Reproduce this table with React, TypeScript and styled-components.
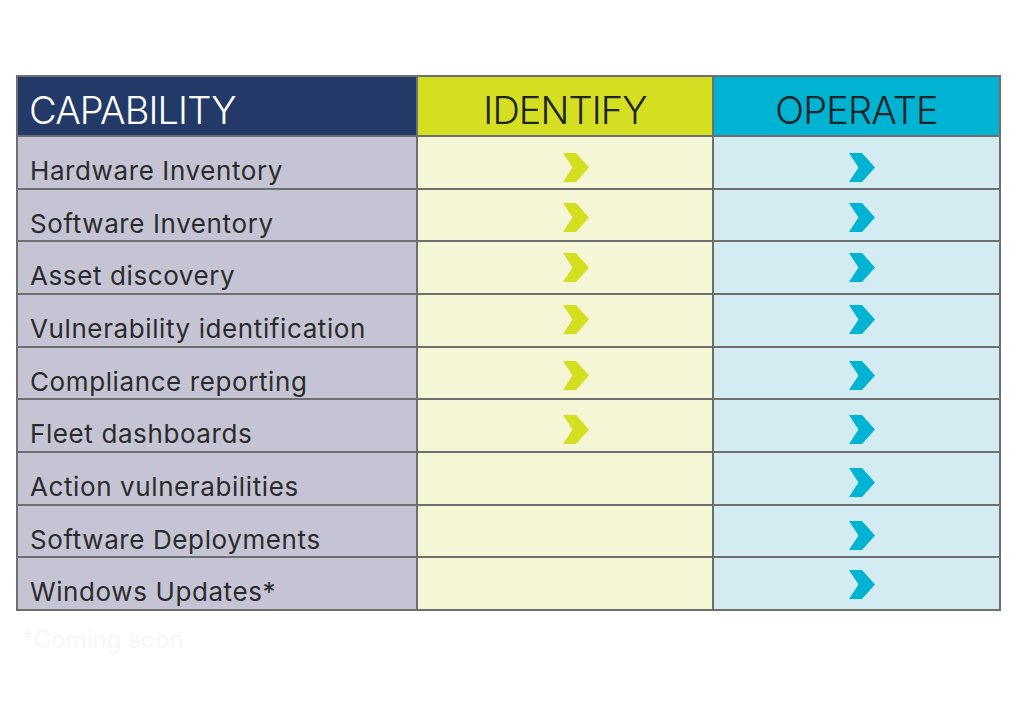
import React from 'react';
import styled, { createGlobalStyle } from 'styled-components';

const GlobalStyle = createGlobalStyle`
  html, body {
    margin: 0;
    padding: 0;
    background: #ffffff;
  }
  body {
    font-family: Inter, "Liberation Sans", Arial, sans-serif;
    color: #2a2a2a;
  }
`;

const colors = {
  border: '#6f6f6f',
  navy: '#233a69',
  lime: '#d4df22',
  cyan: '#00b3d3',
  greyRow: '#c5c4d4',
  limeRow: '#f4f6d6',
  cyanRow: '#d3ecf2',
};

const Page = styled.div`
  width: 1024px;
  height: 722px;
  padding: 75px 0 0 16px;
  box-sizing: border-box;
`;

const Table = styled.div`
  display: grid;
  grid-template-columns: 402px 296px 287px;
  grid-template-rows: 62px repeat(9, 52.67px);
  width: 985px;
  box-sizing: border-box;
`;

const HeaderCell = styled.div<{ $bg: string; $color: string; $align: 'left' | 'center'; $first?: boolean }>`
  background: ${p => p.$bg};
  color: ${p => p.$color};
  border-top: 2px solid ${colors.border};
  border-bottom: 2px solid ${colors.border};
  border-right: 2px solid ${colors.border};
  border-left: ${p => (p.$first ? `2px solid ${colors.border}` : 'none')};
  box-sizing: border-box;
  display: flex;
  align-items: flex-start;
  justify-content: ${p => (p.$align === 'left' ? 'flex-start' : 'center')};
  padding: 13px 0 0 ${p => (p.$align === 'left' ? '11px' : '0')};
  font-size: 38px;
  font-weight: 300;
  line-height: 40px;
  letter-spacing: -0.9px;
`;

const LabelCell = styled.div`
  background: ${colors.greyRow};
  border-left: 2px solid ${colors.border};
  border-right: 2px solid ${colors.border};
  border-bottom: 2px solid ${colors.border};
  box-sizing: border-box;
  padding: 19px 0 0 12px;
  font-size: 26px;
  line-height: 30px;
  font-weight: 400;
  color: #2b2b2b;
  letter-spacing: 0.6px;
  white-space: nowrap;
`;

const MarkCell = styled.div<{ $bg: string; $left: number }>`
  background: ${p => p.$bg};
  border-right: 2px solid ${colors.border};
  border-bottom: 2px solid ${colors.border};
  box-sizing: border-box;
  padding-left: ${p => p.$left}px;
`;

const Chevron = styled.svg<{ $dy: number }>`
  display: block;
  width: 26px;
  height: 29px;
  margin-top: ${p => p.$dy}px;
`;

const Footnote = styled.div`
  margin: 14px 0 0 6px;
  font-size: 24px;
  color: #f7f7f7;
`;

interface Row {
  label: string;
  identify: boolean;
  operate: boolean;
  dy: number;
}

const rows: Row[] = [
  { label: 'Hardware Inventory', identify: true, operate: true, dy: 16 },
  { label: 'Software Inventory', identify: true, operate: true, dy: 13 },
  { label: 'Asset discovery', identify: true, operate: true, dy: 11 },
  { label: 'Vulnerability identification', identify: true, operate: true, dy: 10 },
  { label: 'Compliance reporting', identify: true, operate: true, dy: 13 },
  { label: 'Fleet dashboards', identify: true, operate: true, dy: 15 },
  { label: 'Action vulnerabilities', identify: false, operate: true, dy: 15 },
  { label: 'Software Deployments', identify: false, operate: true, dy: 15 },
  { label: 'Windows Updates*', identify: false, operate: true, dy: 12 },
];

const Mark: React.FC<{ color: string; dy: number }> = ({ color, dy }) => (
  <Chevron $dy={dy} viewBox="0 0 26 29">
    <polygon points="0,0 13,0 26,14.5 13,29 0,29 9.5,14.5" fill={color} />
  </Chevron>
);

const App: React.FC = () => {
  return (
    <Page>
      <GlobalStyle />
      <Table>
        <HeaderCell $bg={colors.navy} $color="#ffffff" $align="left" $first>
          CAPABILITY
        </HeaderCell>
        <HeaderCell $bg={colors.lime} $color="#1f2320" $align="center">
          IDENTIFY
        </HeaderCell>
        <HeaderCell $bg={colors.cyan} $color="#1c2428" $align="center">
          OPERATE
        </HeaderCell>
        {rows.map(row => (
          <React.Fragment key={row.label}>
            <LabelCell>{row.label}</LabelCell>
            <MarkCell $bg={colors.limeRow} $left={145}>
              {row.identify && <Mark color="#d3df1f" dy={row.dy} />}
            </MarkCell>
            <MarkCell $bg={colors.cyanRow} $left={135}>
              {row.operate && <Mark color="#00b3d3" dy={row.dy} />}
            </MarkCell>
          </React.Fragment>
        ))}
      </Table>
      <Footnote>*Coming soon</Footnote>
    </Page>
  );
};

export default App;
